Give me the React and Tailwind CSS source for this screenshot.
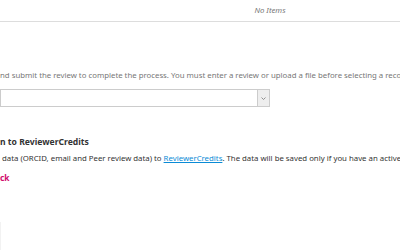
export default function App() {
  const font = { fontFamily: '"Noto Sans", sans-serif' };
  return (
    <div className="w-[400px] h-[250px] overflow-hidden bg-white relative" style={font}>
      <div className="h-[22px] border-b border-[#ddd] flex items-center">
        <div className="w-[540px] shrink-0 text-center text-[7.8px] italic text-[#777]">No Items</div>
      </div>
      <div className="pt-[46px] text-[7.8px] text-[#777] whitespace-nowrap leading-[14px]">
        nd submit the review to complete the process. You must enter a review or upload a file before selecting a recommendation.
      </div>
      <div className="mt-[7px] w-[270px] h-[18px] border border-[#ccc] flex justify-end">
        <div className="w-[12px] h-full bg-[#eee] border-l border-[#ccc] flex items-center justify-center text-[#777]">
          <svg width="5" height="3" viewBox="0 0 5 3"><path d="M0.5 0.5 L2.5 2.5 L4.5 0.5" fill="none" stroke="#777" strokeWidth="0.8"/></svg>
        </div>
      </div>
      <div className="mt-[27px] text-[8.6px] font-bold text-[#333] whitespace-nowrap leading-[16px]">n to ReviewerCredits</div>
      <div className="text-[7.8px] text-[#333] whitespace-nowrap leading-[16px] pl-[2px]">
        data (ORCID, email and Peer review data) to <span className="text-[#0a8bd6] underline">ReviewerCredits</span>. The data will be saved only if you have an active account.
      </div>
      <div className="mt-[5px] text-[8.4px] font-bold text-[#d00a6c] leading-[14px]">ck</div>
      <div className="absolute left-0 top-[222px] w-px h-[28px] bg-[#f2f2f2]"></div>
    </div>
  );
}
